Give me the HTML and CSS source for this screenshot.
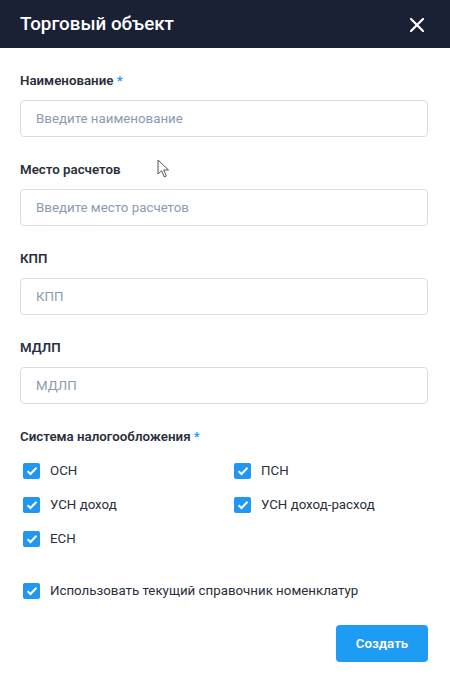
FILE: index.html
```html
<!DOCTYPE html>
<html lang="ru">
<head>
<meta charset="utf-8">
<link rel="stylesheet" href="styles.css">
</head>
<body>
<div class="dialog">
  <header class="head">
    <h1 class="title">Торговый объект</h1>
    <button class="close" aria-label="Закрыть">
      <svg width="14" height="14" viewBox="0 0 14 14"><path d="M1 1L13 13M13 1L1 13" stroke="#fff" stroke-width="2.2" stroke-linecap="square"/></svg>
    </button>
  </header>
  <form class="form">
    <div class="field">
      <label class="label">Наименование <span class="req">*</span></label>
      <input class="input" placeholder="Введите наименование">
    </div>
    <div class="field">
      <label class="label">Место расчетов</label>
      <input class="input" placeholder="Введите место расчетов">
    </div>
    <div class="field">
      <label class="label">КПП</label>
      <input class="input" placeholder="КПП">
    </div>
    <div class="field">
      <label class="label">МДЛП</label>
      <input class="input" placeholder="МДЛП">
    </div>
    <div class="field">
      <label class="label">Система налогообложения <span class="req">*</span></label>
      <div class="checks">
        <label class="check"><span class="box"><svg width="12" height="10" viewBox="0 0 12 10"><path d="M1.5 5.2L4.5 8L10.5 1.8" fill="none" stroke="#fff" stroke-width="2"/></svg></span>ОСН</label>
        <label class="check"><span class="box"><svg width="12" height="10" viewBox="0 0 12 10"><path d="M1.5 5.2L4.5 8L10.5 1.8" fill="none" stroke="#fff" stroke-width="2"/></svg></span>ПСН</label>
        <label class="check"><span class="box"><svg width="12" height="10" viewBox="0 0 12 10"><path d="M1.5 5.2L4.5 8L10.5 1.8" fill="none" stroke="#fff" stroke-width="2"/></svg></span>УСН доход</label>
        <label class="check"><span class="box"><svg width="12" height="10" viewBox="0 0 12 10"><path d="M1.5 5.2L4.5 8L10.5 1.8" fill="none" stroke="#fff" stroke-width="2"/></svg></span>УСН доход-расход</label>
        <label class="check"><span class="box"><svg width="12" height="10" viewBox="0 0 12 10"><path d="M1.5 5.2L4.5 8L10.5 1.8" fill="none" stroke="#fff" stroke-width="2"/></svg></span>ЕСН</label>
      </div>
    </div>
    <label class="check single"><span class="box"><svg width="12" height="10" viewBox="0 0 12 10"><path d="M1.5 5.2L4.5 8L10.5 1.8" fill="none" stroke="#fff" stroke-width="2"/></svg></span>Использовать текущий справочник номенклатур</label>
    <div class="actions">
      <button type="button" class="btn">Создать</button>
    </div>
  </form>
  <svg class="cursor" width="14" height="20" viewBox="0 0 14 20"><path d="M1 1L1 15L4.5 11.8L7.3 18L9.4 17L6.7 11L11.5 11Z" fill="#fff" stroke="#555" stroke-width="1" stroke-linejoin="round"/></svg>
</div>
</body>
</html>
```

FILE: styles.css
```css
* { box-sizing: border-box; }
html, body { margin: 0; padding: 0; }
body {
  width: 450px;
  height: 684px;
  background: #fff;
  font-family: Roboto, "Noto Sans", "Liberation Sans", sans-serif;
  color: #2a2f3b;
  overflow: hidden;
}
.dialog { position: relative; height: 684px; }
.head {
  height: 48px;
  background: #1b2135;
  display: flex;
  align-items: center;
  justify-content: space-between;
  padding: 0 26px 0 20px;
}
.title {
  margin: 0;
  font-size: 18.8px;
  font-weight: 500;
  color: #fff;
}
.close {
  background: none;
  border: 0;
  padding: 0;
  width: 14px;
  height: 14px;
  display: flex;
  margin-top: 1px;
}
.form {
  padding: 25px 22px 0 20px;
  display: flex;
  flex-direction: column;
}
.field {
  display: flex;
  flex-direction: column;
  margin-bottom: 25px;
}
.label {
  font-size: 13.3px;
  line-height: 16px;
  font-weight: 600;
  color: #2a2f3b;
  margin-bottom: 11px;
}
.req { color: #2196f3; }
.input {
  height: 37px;
  border: 1px solid #d8dde5;
  border-radius: 4px;
  padding: 0 15px;
  font-family: inherit;
  font-size: 13.3px;
  color: #2a2f3b;
  outline: none;
}
.input::placeholder { color: #8c9bb0; }
.checks {
  display: grid;
  grid-template-columns: 211px 1fr;
  row-gap: 18px;
  padding-left: 3px;
  margin-top: 7px;
}
.check {
  display: flex;
  align-items: center;
  gap: 10px;
  font-size: 13.3px;
  line-height: 16px;
  color: #2a2f3b;
}
.box {
  width: 17px;
  height: 16px;
  border-radius: 2px;
  background: #2196f3;
  display: flex;
  align-items: center;
  justify-content: center;
  flex: none;
}
.single {
  padding-left: 3px;
  margin-top: 11px;
}
.actions {
  display: flex;
  justify-content: flex-end;
  margin-top: 26px;
}
.btn {
  width: 92px;
  height: 37px;
  border: 0;
  border-radius: 4px;
  background: #1e9bf2;
  color: #fff;
  font-family: inherit;
  font-size: 13.3px;
  font-weight: 600;
}
.cursor {
  position: absolute;
  left: 157px;
  top: 159px;
}
```
